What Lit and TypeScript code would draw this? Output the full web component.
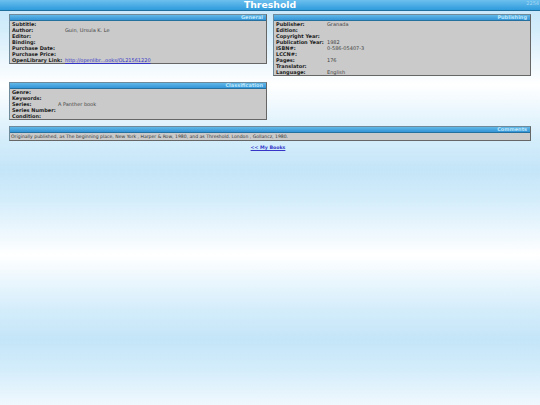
import { LitElement, html, css } from "lit";
import { customElement } from "lit/decorators.js";

type Row = [string, string?, string?];

const general: Row[] = [
  ["Subtitle:"], ["Author:", "Guin, Ursula K. Le"], ["Editor:"], ["Binding:"],
  ["Purchase Date:"], ["Purchase Price:"],
  ["OpenLibrary Link:", "http://openlibr...ooks/OL21561220", "#"],
];
const publishing: Row[] = [
  ["Publisher:", "Granada"], ["Edition:"], ["Copyright Year:"], ["Publication Year:", "1982"],
  ["ISBN#:", "0-586-05407-3"], ["LCCN#:"], ["Pages:", "176"], ["Translator:"], ["Language:", "English"],
];
const classification: Row[] = [
  ["Genre:"], ["Keywords:"], ["Series:", "A Panther book"], ["Series Number:"], ["Condition:"],
];

@customElement("app-root")
export class AppRoot extends LitElement {
  static styles = css`
    :host {
      display: block;
      width: 540px;
      height: 405px;
      overflow: hidden;
      font-family: "DejaVu Sans", sans-serif;
      font-size: 5px;
      line-height: 6px;
      color: #444;
      background: repeating-linear-gradient(180deg, #c4e5f8 0, #d4edfb 30px, #ffffff 85px, #d4edfb 140px, #c4e5f8 170px);
    }
    .top {
      position: relative;
      height: 10px;
      border-bottom: 1px solid #1f6f9f;
      background: linear-gradient(180deg, #6cc0ee, #2f9bdc);
      text-align: center;
      color: #fff;
      font-weight: bold;
      font-size: 9.3px;
      line-height: 10px;
    }
    .id {
      position: absolute;
      right: 1px;
      top: 0;
      font-size: 5px;
      line-height: 7px;
      font-weight: normal;
      color: #a4d6f3;
    }
    .columns {
      display: grid;
      grid-template-columns: 258px 258px;
      column-gap: 6px;
      padding: 3px 9px 0;
      align-items: start;
    }
    .wide {
      margin: 6px 273px 0 9px;
    }
    .box {
      box-sizing: border-box;
      border: 1px solid #6f8a9a;
      border-right-color: #666;
      border-bottom-color: #666;
      background: #cacaca;
    }
    .head {
      height: 5px;
      padding: 0 3px;
      text-align: right;
      font-weight: bold;
      line-height: 5px;
      color: #bfe6fb;
      background: linear-gradient(180deg, #62b8e8, #3394d6);
      border-bottom: 1px solid #25709f;
    }
    .rows {
      padding: 0 2px;
    }
    .row {
      display: grid;
      height: 6px;
    }
    .general { grid-template-columns: 53px 1fr; }
    .pub { grid-template-columns: 51px 1fr; }
    .cls { grid-template-columns: 46px 1fr; }
    .label { font-weight: bold; color: #1c1c1c; white-space: nowrap; }
    .val { white-space: nowrap; }
    a { color: #3535c8; text-decoration: underline; }
    .comments {
      margin: 6px 9px 0;
    }
    .comments .text { padding: 0 1px; height: 7px; line-height: 7px; font-size: 4.57px; color: #333; white-space: nowrap; }
    .back {
      margin-top: 4px;
      padding-right: 4px;
      text-align: center;
      font-weight: bold;
      font-size: 4.7px;
    }
  `;

  private rows(rows: Row[], cls: string) {
    return html`<div class="rows">
      ${rows.map(([l, v, href]) => html`<div class="row ${cls}">
        <span class="label">${l}</span>
        <span class="val">${href ? html`<a href=${href}>${v}</a>` : v ?? ""}</span>
      </div>`)}
    </div>`;
  }

  private box(title: string, rows: Row[], cls: string) {
    return html`<section class="box">
      <div class="head">${title}</div>
      ${this.rows(rows, cls)}
    </section>`;
  }

  render() {
    return html`
      <div class="top">Threshold<span class="id">2254</span></div>
      <div class="columns">
        ${this.box("General", general, "general")}
        ${this.box("Publishing", publishing, "pub")}
      </div>
      <div class="wide">${this.box("Classification", classification, "cls")}</div>
      <section class="box comments">
        <div class="head">Comments</div>
        <div class="text">Originally published, as The beginning place, New York , Harper &amp; Row, 1980, and as Threshold. London , Gollancz, 1980.</div>
      </section>
      <div class="back"><a href="#">&lt;&lt; My Books</a></div>
    `;
  }
}
